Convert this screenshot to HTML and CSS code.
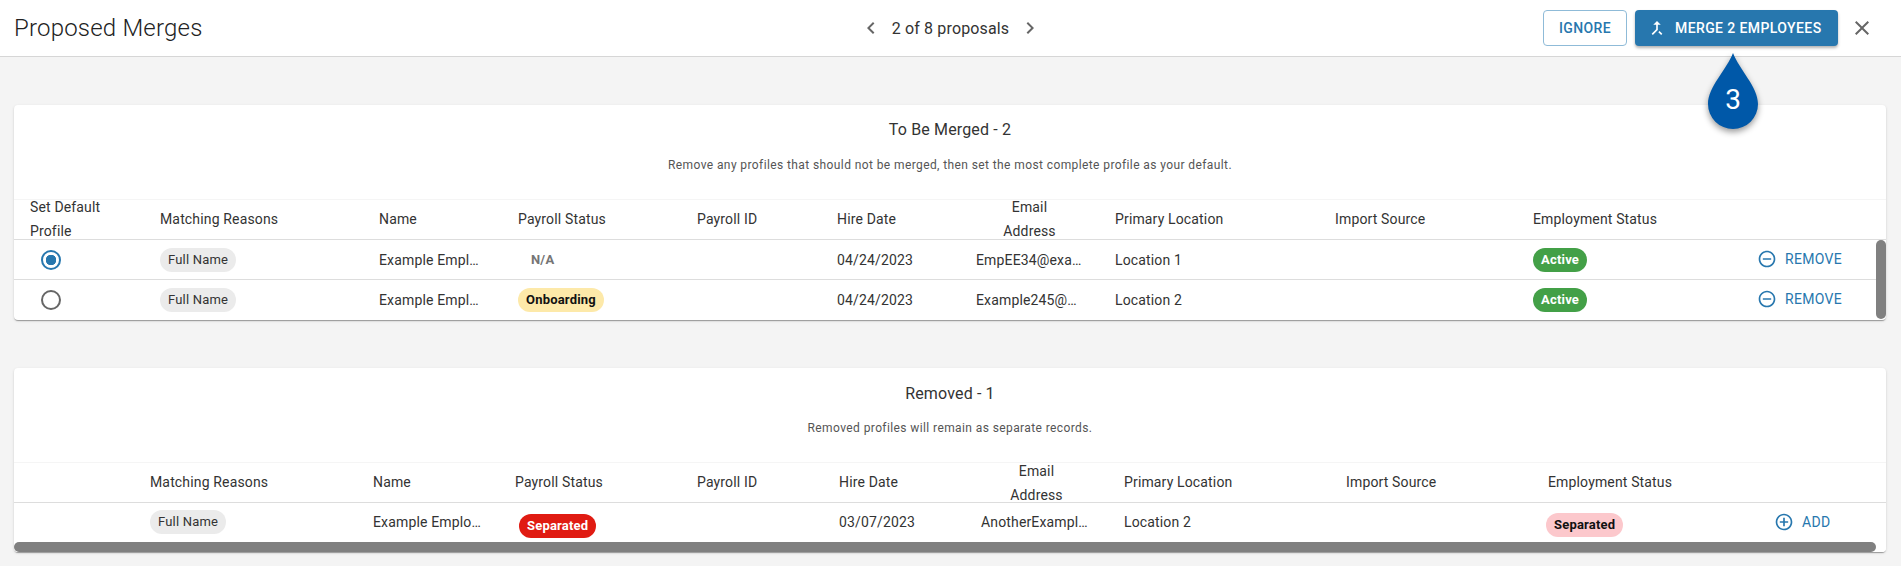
FILE: index.html
```html
<!DOCTYPE html>
<html lang="en">
<head>
    <meta charset="UTF-8">
    <title>Proposed Merges</title>
    <link rel="stylesheet" href="styles.css">
</head>
<body>

<!-- Top bar -->
<header class="topbar">
    <h1 class="page-title">Proposed Merges</h1>
    <div class="pager">
        <svg class="pager-icon" viewBox="0 0 24 24"><path d="M15.41 7.41 14 6l-6 6 6 6 1.41-1.41L10.83 12z"/></svg>
        <span class="pager-text">2 of 8 proposals</span>
        <svg class="pager-icon" viewBox="0 0 24 24"><path d="M10 6 8.59 7.41 13.17 12l-4.58 4.59L10 18l6-6z"/></svg>
    </div>
    <div class="actions">
        <button class="btn btn-outline">Ignore</button>
        <button class="btn btn-primary">
            <svg class="btn-icon" viewBox="0 0 24 24"><path d="M17 20.41 18.41 19 15 15.59 13.59 17 17 20.41zM7.5 8H11v5.59L5.59 19 7 20.41l6-6V8h3.5L12 3.5 7.5 8z"/></svg>
            Merge 2 Employees
        </button>
        <svg class="close-icon" viewBox="0 0 24 24"><path d="M19 6.41 17.59 5 12 10.59 6.41 5 5 6.41 10.59 12 5 17.59 6.41 19 12 13.41 17.59 19 19 17.59 13.41 12z"/></svg>
    </div>
</header>

<!-- Step marker -->
<div class="step-drop">
    <svg class="step-shape" viewBox="0 0 52 78"><path d="M26 1C32 17 51 35 51 52a25 25 0 0 1-50 0C1 35 20 17 26 1z"/></svg>
    <span class="step-num">3</span>
</div>

<main class="content">

    <!-- To be merged -->
    <section class="card card-merged">
        <h2 class="card-title">To Be Merged - 2</h2>
        <p class="card-note">Remove any profiles that should not be merged, then set the most complete profile as your default.</p>
        <table class="grid">
            <colgroup><col><col><col><col><col><col><col><col><col><col><col></colgroup>
            <thead>
                <tr>
                    <th><span class="two-line">Set Default<br>Profile</span></th>
                    <th>Matching Reasons</th>
                    <th>Name</th>
                    <th>Payroll Status</th>
                    <th>Payroll ID</th>
                    <th>Hire Date</th>
                    <th class="th-center"><span class="two-line">Email<br>Address</span></th>
                    <th>Primary Location</th>
                    <th>Import Source</th>
                    <th>Employment Status</th>
                    <th></th>
                </tr>
            </thead>
            <tbody>
                <tr>
                    <td><span class="radio radio-on"></span></td>
                    <td><span class="chip chip-reason">Full Name</span></td>
                    <td>Example Empl…</td>
                    <td><span class="chip chip-none">N/A</span></td>
                    <td></td>
                    <td>04/24/2023</td>
                    <td>EmpEE34@exa…</td>
                    <td>Location 1</td>
                    <td></td>
                    <td><span class="chip chip-active">Active</span></td>
                    <td>
                        <a class="row-action">
                            <svg class="action-icon" viewBox="0 0 24 24"><path d="M7 11v2h10v-2H7zm5-9C6.48 2 2 6.48 2 12s4.48 10 10 10 10-4.48 10-10S17.52 2 12 2zm0 18c-4.41 0-8-3.59-8-8s3.59-8 8-8 8 3.59 8 8-3.59 8-8 8z"/></svg>
                            Remove
                        </a>
                    </td>
                </tr>
                <tr>
                    <td><span class="radio"></span></td>
                    <td><span class="chip chip-reason">Full Name</span></td>
                    <td>Example Empl…</td>
                    <td><span class="chip chip-onboarding">Onboarding</span></td>
                    <td></td>
                    <td>04/24/2023</td>
                    <td>Example245@…</td>
                    <td>Location 2</td>
                    <td></td>
                    <td><span class="chip chip-active">Active</span></td>
                    <td>
                        <a class="row-action">
                            <svg class="action-icon" viewBox="0 0 24 24"><path d="M7 11v2h10v-2H7zm5-9C6.48 2 2 6.48 2 12s4.48 10 10 10 10-4.48 10-10S17.52 2 12 2zm0 18c-4.41 0-8-3.59-8-8s3.59-8 8-8 8 3.59 8 8-3.59 8-8 8z"/></svg>
                            Remove
                        </a>
                    </td>
                </tr>
            </tbody>
        </table>
        <div class="vscroll"></div>
    </section>

    <!-- Removed -->
    <section class="card card-removed">
        <h2 class="card-title">Removed - 1</h2>
        <p class="card-note">Removed profiles will remain as separate records.</p>
        <table class="grid">
            <colgroup><col><col><col><col><col><col><col><col><col><col><col></colgroup>
            <thead>
                <tr>
                    <th></th>
                    <th>Matching Reasons</th>
                    <th>Name</th>
                    <th>Payroll Status</th>
                    <th>Payroll ID</th>
                    <th>Hire Date</th>
                    <th class="th-center"><span class="two-line">Email<br>Address</span></th>
                    <th>Primary Location</th>
                    <th>Import Source</th>
                    <th>Employment Status</th>
                    <th></th>
                </tr>
            </thead>
            <tbody>
                <tr>
                    <td></td>
                    <td><span class="chip chip-reason">Full Name</span></td>
                    <td>Example Emplo…</td>
                    <td><span class="chip chip-separated">Separated</span></td>
                    <td></td>
                    <td>03/07/2023</td>
                    <td>AnotherExampl…</td>
                    <td>Location 2</td>
                    <td></td>
                    <td><span class="chip chip-separated-light">Separated</span></td>
                    <td>
                        <a class="row-action">
                            <svg class="action-icon" viewBox="0 0 24 24"><path d="M13 7h-2v4H7v2h4v4h2v-4h4v-2h-4V7zm-1-5C6.48 2 2 6.48 2 12s4.48 10 10 10 10-4.48 10-10S17.52 2 12 2zm0 18c-4.41 0-8-3.59-8-8s3.59-8 8-8 8 3.59 8 8-3.59 8-8 8z"/></svg>
                            Add
                        </a>
                    </td>
                </tr>
            </tbody>
        </table>
        <div class="hscroll"><div class="hscroll-thumb"></div></div>
    </section>

</main>

</body>
</html>
```

FILE: styles.css
```css
* {
    box-sizing: border-box;
}
html, body {
    margin: 0;
    height: 100%;
}
body {
    font-family: Roboto, "Liberation Sans", sans-serif;
    font-size: 14px;
    color: #333;
    background-color: #f4f4f4;
    overflow: hidden;
    position: relative;
}

/* top bar */
.topbar {
    display: grid;
    grid-template-columns: 1fr auto 1fr;
    align-items: center;
    height: 57px;
    padding: 0 14px;
    background-color: #fff;
    border-bottom: 1px solid #d6d6d6;
}
.page-title {
    margin: 0;
    font-size: 24px;
    font-weight: 300;
    letter-spacing: 0.2px;
    color: #222;
}
.pager {
    display: flex;
    align-items: center;
    gap: 9px;
}
.pager-icon {
    width: 24px;
    height: 24px;
    fill: #666;
}
.pager-text {
    font-size: 16px;
    letter-spacing: 0.15px;
    color: #333;
}
.actions {
    display: flex;
    justify-content: flex-end;
    align-items: center;
    gap: 8px;
    padding-right: 13px;
}
.btn {
    display: inline-flex;
    align-items: center;
    justify-content: center;
    height: 36px;
    border-radius: 4px;
    font-family: inherit;
    font-size: 14px;
    font-weight: 500;
    letter-spacing: 0.4px;
    text-transform: uppercase;
}
.btn-outline {
    width: 84px;
    padding: 0;
    background-color: #fff;
    color: #2777ae;
    border: 1px solid #8fbbd8;
}
.btn-primary {
    width: 203px;
    padding: 0 0 0 12px;
    justify-content: flex-start;
    gap: 8px;
    background-color: #2777ae;
    color: #fff;
    border: none;
    box-shadow: 0 2px 3px rgba(0, 0, 0, 0.3);
}
.btn-icon {
    width: 20px;
    height: 20px;
    fill: #fff;
}
.close-icon {
    width: 24px;
    height: 24px;
    margin: 0 0 0 4px;
    fill: #666;
}

/* step marker, sits over the bar and the first card */
.step-drop {
    position: absolute;
    left: 1707px;
    top: 52px;
    width: 52px;
    height: 78px;
    z-index: 5;
}
.step-shape {
    display: block;
    width: 52px;
    height: 78px;
    fill: #0058a8;
    filter: drop-shadow(0 3px 3px rgba(0, 0, 0, 0.4));
}
.step-num {
    position: absolute;
    left: 0;
    right: 0;
    top: 32px;
    text-align: center;
    font-size: 28px;
    line-height: 32px;
    color: #fff;
}

/* cards */
.content {
    display: flex;
    flex-direction: column;
    gap: 48px;
    padding: 48px 15px 0 14px;
}
.card {
    position: relative;
    background-color: #fff;
    border-radius: 4px;
    box-shadow: 0 2px 1px -1px rgba(0, 0, 0, 0.2), 0 1px 1px 0 rgba(0, 0, 0, 0.14), 0 1px 3px 0 rgba(0, 0, 0, 0.12);
}
.card-title {
    margin: 0;
    padding-top: 15px;
    height: 53px;
    font-size: 16px;
    font-weight: 400;
    line-height: 20px;
    text-align: center;
    letter-spacing: 0.15px;
    color: #333;
}
.card-removed .card-title {
    padding-top: 16px;
}
.card-note {
    margin: 0;
    height: 41px;
    font-size: 12px;
    line-height: 14px;
    letter-spacing: 0.4px;
    text-align: center;
    color: #555;
}

/* tables */
.grid {
    width: 100%;
    table-layout: fixed;
    border-collapse: collapse;
}
.grid th {
    height: 40px;
    padding: 0 16px;
    font-size: 14px;
    font-weight: 400;
    line-height: 20px;
    text-align: left;
    letter-spacing: 0.15px;
    color: #333;
    border-top: 1px solid #f5f5f5;
    border-bottom: 1px solid #ddd;
}
.card-merged .grid th {
    padding-bottom: 2px;
}
.grid th.th-center {
    text-align: center;
}
/* header text is taller than its row and spills over it */
.two-line {
    display: block;
    line-height: 24px;
    margin: -6px 0;
}
.card-removed .two-line {
    padding-top: 2px;
}
.grid td {
    height: 40px;
    padding: 0 16px;
    font-size: 14px;
    letter-spacing: 0.15px;
    color: #333;
    border-bottom: 1px solid #ddd;
    white-space: nowrap;
}
.grid tr:last-child td {
    border-bottom: none;
}
.card-merged col:nth-child(1) { width: 130px; }
.card-merged col:nth-child(2) { width: 219px; }
.card-merged col:nth-child(3) { width: 139px; }
.card-merged col:nth-child(4) { width: 179px; }
.card-merged col:nth-child(5) { width: 140px; }
.card-merged col:nth-child(6) { width: 139px; }
.card-merged col:nth-child(7) { width: 139px; }
.card-merged col:nth-child(8) { width: 220px; }
.card-merged col:nth-child(9) { width: 198px; }
.card-merged col:nth-child(10) { width: 225px; }
.card-removed col:nth-child(1) { width: 120px; }
.card-removed col:nth-child(2) { width: 223px; }
.card-removed col:nth-child(3) { width: 142px; }
.card-removed col:nth-child(4) { width: 182px; }
.card-removed col:nth-child(5) { width: 142px; }
.card-removed col:nth-child(6) { width: 142px; }
.card-removed col:nth-child(7) { width: 143px; }
.card-removed col:nth-child(8) { width: 222px; }
.card-removed col:nth-child(9) { width: 202px; }
.card-removed col:nth-child(10) { width: 227px; }

/* radios */
.radio {
    display: block;
    width: 20px;
    height: 20px;
    margin-left: 11px;
    border: 2px solid #666;
    border-radius: 50%;
}
.radio-on {
    border-color: #2777ae;
    background: radial-gradient(circle, #2777ae 0 5px, #fff 5.5px);
}

/* chips */
.chip {
    display: inline-block;
    height: 24px;
    padding: 0 8px;
    border-radius: 12px;
    font-size: 13px;
    line-height: 24px;
    letter-spacing: 0.2px;
    vertical-align: middle;
}
.chip-reason {
    background-color: #ebebeb;
    color: #333;
}
.chip-none {
    padding: 0 13px;
    font-weight: 700;
    color: #757575;
}
.chip-onboarding {
    background-color: #fde9a9;
    font-weight: 700;
    color: #111;
}
.chip-active {
    background-color: #43a047;
    font-weight: 700;
    color: #fff;
}
.chip-separated {
    margin: 8px 0 0 4px;
    background-color: #e01b12;
    font-weight: 700;
    color: #fff;
}
.chip-separated-light {
    margin: 6px 0 0 -2px;
    background-color: #fcc8cc;
    font-weight: 700;
    color: #111;
}

/* row actions */
.row-action {
    display: inline-flex;
    align-items: center;
    gap: 8px;
    margin-left: -1px;
    padding-top: 2px;
    font-size: 14px;
    letter-spacing: 0.3px;
    text-transform: uppercase;
    color: #2777ae;
}
.action-icon {
    width: 20px;
    height: 20px;
    fill: #2777ae;
}

/* scrollbars drawn by the grid */
.vscroll {
    position: absolute;
    right: 0;
    bottom: 1px;
    width: 10px;
    height: 79px;
    border-radius: 5px;
    background-color: #808080;
}
.hscroll {
    height: 10px;
    background-color: #fff;
    border-radius: 0 0 4px 4px;
}
.hscroll-thumb {
    width: 1862px;
    height: 10px;
    border-radius: 5px;
    background-color: #808080;
}
```
